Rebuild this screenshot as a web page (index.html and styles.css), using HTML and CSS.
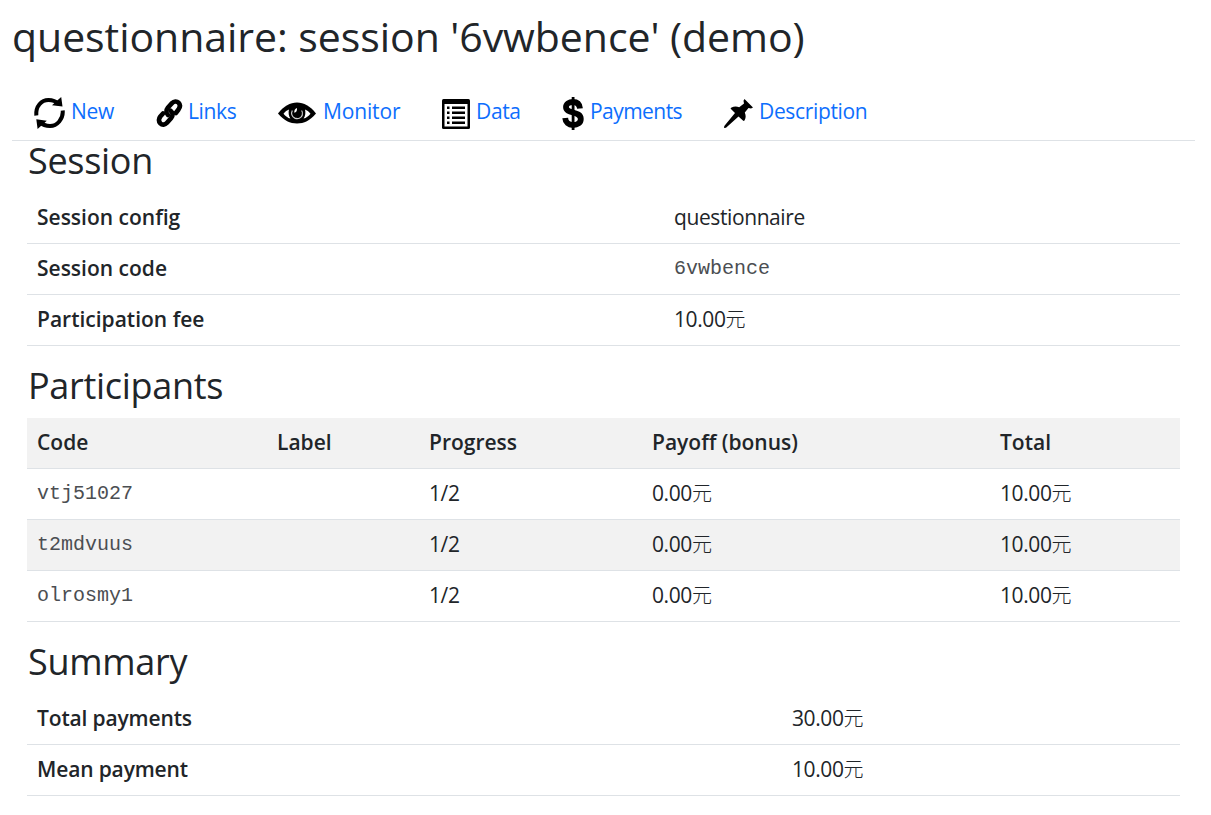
FILE: index.html
```html
<!DOCTYPE html>
<html lang="en">
<head>
<meta charset="utf-8">
<title>questionnaire: session '6vwbence' (demo)</title>
<link rel="stylesheet" href="styles.css">
</head>
<body>
<h1 class="page-title">questionnaire: session '6vwbence' (demo)</h1>
<nav class="tabs">
  <a class="tab tab-new" href="#">
    <svg class="icon" width="32" height="32" viewBox="0 0 32 32"><g fill="none" stroke="#000" stroke-width="4"><path d="M3.300 18.500C2.500 9 8.500 3 15.500 3C20 3 23 4.400 25.500 7"/><path d="M29.700 13.500C30.500 22 24 29 17 29C12.500 29 9.500 27.600 7 25"/></g><path d="M28.200 0L29.500 9.500L19 8.300ZM4.600 32L3.300 22.300L13.800 23.700Z"/></svg>
    <span>New</span></a>
  <a class="tab tab-links" href="#">
    <svg class="icon" width="28" height="30" viewBox="0 0 28 30"><g fill="none" stroke="#000" stroke-width="4.700" stroke-linecap="round" stroke-linejoin="round"><path d="M13 17C11 15.300 11 12 13 9.500L17 5.200C19 3 21.800 3 23.500 4.700C25.300 6.500 25.300 9 23.500 11.500L20.800 15"/><path d="M15.700 12.800C18 14.500 18.300 17.500 16 20.300L12 24.800C10 27 7.200 27.200 5.300 25.300C3.500 23.500 3.500 20.700 5.300 18.500L8 15.500"/></g></svg>
    <span>Links</span></a>
  <a class="tab tab-monitor" href="#">
    <svg class="icon" width="38" height="22" viewBox="0 0 38 22"><path d="M0 11.500C6 4 12 .6 19 .6S32 4 38 11.500C32 18.500 26 21.500 19 21.500S6 18.500 0 11.500Z"/><path fill="#fff" d="M5.500 11.700C7.200 9.700 9 8.400 11 7.600C10.200 10.600 10.600 14 12.400 16.600C9.800 15.800 7.500 14.200 5.500 11.700ZM32.500 11.700C30.800 9.700 29 8.400 27 7.600C27.800 10.600 27.400 14 25.600 16.600C28.200 15.800 30.500 14.200 32.500 11.700Z"/><path fill="none" stroke="#ccc" stroke-width="1.200" d="M14.300 8.500C12.800 11.500 13.800 14.800 16.800 16.100C19.800 17.300 23.500 16.200 24.300 13C24.800 11 24.400 9.500 23.600 8.500"/><path fill="#fff" d="M19 6C17 6.700 16 8.500 16.300 10.800C18 10.500 19.300 9 19 6Z"/></svg>
    <span>Monitor</span></a>
  <a class="tab tab-data" href="#">
    <svg class="icon" width="28" height="30" viewBox="0 0 28 30"><path d="M1.500 0H26.500Q28 0 28 1.500V28.500Q28 30 26.500 30H1.500Q0 30 0 28.500V1.500Q0 0 1.500 0Z"/><path fill="#fff" d="M2.500 5H25.500V27.500H2.500Z"/><path d="M5 7.500h2.500v2.500H5zM10 7.500h13v2.500H10zM5 12.500h2.500v2.500H5zM10 12.500h13v2.500H10zM5 17.500h2.500v2.500H5zM10 17.500h13v2.500H10zM5 22.500h2.500V25H5zM10 22.500h13V25H10z"/></svg>
    <span>Data</span></a>
  <a class="tab tab-payments" href="#">
    <svg class="icon" width="22" height="33" viewBox="0 0 22 33"><path fill="none" stroke="#000" stroke-width="5.800" d="M18 11.500C17.500 6.800 15 5 11 5C7 5 4 6.800 4 10C4 17.500 18.800 13.500 18.800 22C18.800 26 15.500 28 11 28C6.500 28 3.500 25.500 3.200 21"/><path d="M9.700 0h2.800v33h-2.800z"/></svg>
    <span>Payments</span></a>
  <a class="tab tab-description" href="#">
    <svg class="icon" width="29" height="29" viewBox="0 0 29 29"><path d="M20.500 0L29 8.500L27 9.500L24.500 9L20.800 13.500C22 16.500 22 19 20.500 21.500L19.500 22L14.500 17.500L2 28.700L0 28.900L.3 27L11 14L6.500 9.500L7.500 8.500C10 7.300 12.500 7.200 15.200 8.200L20 4.500L19.500 1.800Z"/></svg>
    <span>Description</span></a>
</nav>
<main class="content">
  <h2 class="heading h-session">Session</h2>
  <table class="table t-session">
    <tr><th>Session config</th><td>questionnaire</td></tr>
    <tr><th>Session code</th><td><code>6vwbence</code></td></tr>
    <tr><th>Participation fee</th><td>10.00<span class="cjk">元</span></td></tr>
  </table>
  <h2 class="heading h-participants">Participants</h2>
  <table class="table striped">
    <colgroup><col class="c-code"><col class="c-label"><col class="c-progress"><col class="c-payoff"><col></colgroup>
    <tr><th>Code</th><th>Label</th><th>Progress</th><th>Payoff (bonus)</th><th>Total</th></tr>
    <tr><td><code>vtj51027</code></td><td></td><td>1/2</td><td>0.00<span class="cjk">元</span></td><td>10.00<span class="cjk">元</span></td></tr>
    <tr><td><code>t2mdvuus</code></td><td></td><td>1/2</td><td>0.00<span class="cjk">元</span></td><td>10.00<span class="cjk">元</span></td></tr>
    <tr><td><code>olrosmy1</code></td><td></td><td>1/2</td><td>0.00<span class="cjk">元</span></td><td>10.00<span class="cjk">元</span></td></tr>
  </table>
  <h2 class="heading h-summary">Summary</h2>
  <table class="table t-summary">
    <tr><th>Total payments</th><td>30.00<span class="cjk">元</span></td></tr>
    <tr><th>Mean payment</th><td>10.00<span class="cjk">元</span></td></tr>
  </table>
</main>
</body>
</html>
```
FILE: styles.css
```css
* { box-sizing: border-box; }
body {
  margin: 0;
  padding: 0 16px 0 12px;
  background: #fff;
  color: #212529;
  font: 21px/30px "Open Sans", "Noto Sans CJK SC", sans-serif;
  letter-spacing: -0.4px;
}
.page-title {
  margin: 0;
  padding-top: 11px;
  height: 85px;
  font-size: 41px;
  line-height: 50px;
  font-weight: 400;
  letter-spacing: -0.05px;
  white-space: nowrap;
}
.tabs {
  display: grid;
  grid-template-columns: 122px 123px 164px 120px 162px 160px;
  height: 56px;
  padding-left: 21px;
  border-bottom: 1px solid #dee2e6;
  letter-spacing: -0.35px;
}
.tab {
  display: flex;
  align-items: flex-start;
  padding-top: 11px;
  color: #0d6efd;
  text-decoration: none;
  white-space: nowrap;
}
.icon { flex: none; }
.tab-new .icon { margin: 1px 6px 0 0; }
.tab-links .icon { margin: 2px 5px 0 0; }
.tab-monitor .icon { margin: 6px 7px 0 0; }
.tab-monitor { letter-spacing: -0.15px; }
.tab-data .icon { margin: 3px 6px 0 0; }
.tab-payments .icon { margin: 1px 6px 0 0; }
.tab-payments { letter-spacing: -0.55px; }
.tab-description .icon { margin: 3px 6px 0 0; }
.content { padding: 0 15px; }
.heading {
  margin: 0;
  padding-left: 1px;
  font-size: 36px;
  line-height: 40px;
  font-weight: 400;
  letter-spacing: -0.3px;
}
.h-session { height: 52px; }
.h-participants { height: 72px; padding-top: 20px; }
.h-summary { height: 72px; padding-top: 20px; }
.table {
  width: 1153px;
  table-layout: fixed;
  border-spacing: 0;
}
.table th, .table td {
  height: 51px;
  padding: 9px 10px 11px;
  border-bottom: 1px solid #dee2e6;
  text-align: left;
  vertical-align: top;
  white-space: nowrap;
}
.table th { font-weight: 600; letter-spacing: 0; }
.table.t-summary th { letter-spacing: -0.15px; }
.striped tr:nth-child(odd) { background: #f2f2f2; }
.t-session th { width: 637px; }
.t-summary th { width: 755px; }
.c-code { width: 240px; }
.c-label { width: 152px; }
.c-progress { width: 223px; }
.c-payoff { width: 348px; }
code {
  font: 20px/20px "Liberation Mono", monospace;
  letter-spacing: 0;
  color: #4b4e52;
  vertical-align: 2px;
}
.cjk { font: 300 20px/20px "Noto Sans CJK SC", sans-serif; letter-spacing: 0; }
```
